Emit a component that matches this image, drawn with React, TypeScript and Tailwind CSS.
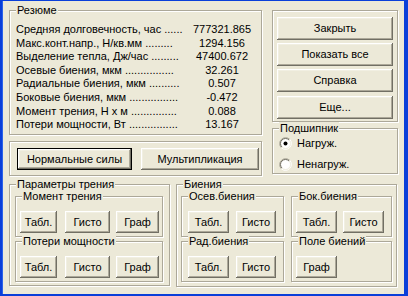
import React from "react";

function Group({ title, className, children }: { title?: string; className: string; children?: React.ReactNode }) {
  return (
    <div className={"relative border border-[#aca899] shadow-[inset_1px_1px_0_#fff,1px_1px_0_#fff] " + className}>
      {title ? (
        <span className="absolute -top-[7px] left-[6px] px-[1px] bg-[#ece9d8] leading-[13px] whitespace-nowrap">{title}</span>
      ) : null}
      {children}
    </div>
  );
}

function Btn({ className, children, def }: { className: string; children: React.ReactNode; def?: boolean }) {
  return (
    <div
      className={
        "flex items-center justify-center bg-[#ece9d8] leading-[13px] whitespace-nowrap shadow-[inset_-1px_-1px_0_#716f64,inset_1px_1px_0_#fff,inset_-2px_-2px_0_#aca899,inset_2px_2px_0_#f1efe2] " +
        (def ? "border border-black " : "") +
        className
      }
    >
      {children}
    </div>
  );
}

function Radio({ checked, label }: { checked?: boolean; label: string }) {
  return (
    <div className="flex items-center gap-[5px] h-[13px] leading-[13px]">
      <svg width="13" height="13" viewBox="0 0 13 13">
        <circle cx="6.5" cy="6.5" r="5" fill="#fff" />
        <path d="M2.26 10.74 A6 6 0 0 1 10.74 2.26" fill="none" stroke="#aca899" strokeWidth="1" />
        <path d="M10.74 2.26 A6 6 0 0 1 2.26 10.74" fill="none" stroke="#fff" strokeWidth="1" />
        <path d="M2.96 10.04 A5 5 0 0 1 10.04 2.96" fill="none" stroke="#716f64" strokeWidth="1" />
        <path d="M10.04 2.96 A5 5 0 0 1 2.96 10.04" fill="none" stroke="#f1efe2" strokeWidth="1" />
        {checked ? <circle cx="6.5" cy="6.5" r="2" fill="#000" /> : null}
      </svg>
      <span>{label}</span>
    </div>
  );
}

const rows: [string, string][] = [
  ["Средняя долговечность, час ......", "777321.865"],
  ["Макс.конт.напр., Н/кв.мм .........", "1294.156"],
  ["Выделение тепла, Дж/час .........", "47400.672"],
  ["Осевые биения, мкм ................", "32.261"],
  ["Радиальные биения, мкм ..........", "0.507"],
  ["Боковые биения, мкм ................", "-0.472"],
  ["Момент трения, Н х м ...............", "0.088"],
  ["Потери мощности, Вт ................", "13.167"],
];

export default function App() {
  return (
    <div className="w-[408px] h-[296px] bg-[#0a3fd9] pt-[1px] pl-[3px] pr-[4px] pb-[2px] font-['Liberation_Sans',Arial,sans-serif] text-[11px] text-black">
      <div className="w-full h-full bg-[#ece9d8] pl-[6px] pt-[9px] shadow-[-1px_0_0_#2a62ea]">
        {/* top row */}
        <div className="flex gap-[9px]">
          <div className="w-[254px] flex flex-col">
            <Group title="Резюме" className="w-[253px] h-[125px] pt-[12px] pl-[6px]">
              {rows.map(([l, v]) => (
                <div key={l} className="flex h-[13.6px] leading-[13.6px]">
                  <div className="w-[170px] flex-none whitespace-nowrap">{l}</div>
                  <div className="w-[72px] flex-none text-center">{v}</div>
                </div>
              ))}
            </Group>
            <Group className="mt-[6px] w-[253px] h-[35px] pl-[7px] pt-[6px] flex gap-[9px]">
              <Btn def className="w-[115px] h-[22px]">Нормальные силы</Btn>
              <Btn className="w-[118px] h-[22px]">Мультипликация</Btn>
            </Group>
          </div>
          <div className="w-[127px] flex flex-col">
            <Group className="w-[126px] h-[112px] pl-[4px] pt-[6px] flex flex-col gap-[3px]">
              <Btn className="w-[116px] h-[23px]">Закрыть</Btn>
              <Btn className="w-[116px] h-[23px]">Показать все</Btn>
              <Btn className="w-[116px] h-[23px]">Справка</Btn>
              <Btn className="w-[116px] h-[23px] mt-[1px]">Еще...</Btn>
            </Group>
            <Group title="Подшипник" className="mt-[6px] w-[126px] h-[46px] pl-[6px] pt-[8px] flex flex-col gap-[8px]">
              <Radio checked label="Нагруж." />
              <Radio label="Ненагруж." />
            </Group>
          </div>
        </div>
        {/* bottom row */}
        <div className="flex gap-[6px] mt-[8px]">
          <Group title="Параметры трения" className="w-[161px] h-[102px] pl-[5px] pt-[11px] flex flex-col gap-[4px]">
            <Group title="Момент трения" className="w-[148px] h-[41px] pl-[4px] pt-[14px] flex">
              <Btn className="w-[37px] h-[22px]">Табл.</Btn>
              <Btn className="w-[45px] h-[22px] ml-[8px]">Гисто</Btn>
              <Btn className="w-[43px] h-[22px] ml-[6px]">Граф</Btn>
            </Group>
            <Group title="Потери мощности" className="w-[148px] h-[41px] pl-[4px] pt-[14px] flex">
              <Btn className="w-[37px] h-[22px]">Табл.</Btn>
              <Btn className="w-[45px] h-[22px] ml-[8px]">Гисто</Btn>
              <Btn className="w-[43px] h-[22px] ml-[6px]">Граф</Btn>
            </Group>
          </Group>
          <Group title="Биения" className="w-[221px] h-[103px] pl-[4px] pt-[11px] grid grid-cols-[104px_102px] gap-x-[6px] gap-y-[4px] content-start">
            <Group title="Осев.биения" className="w-[103px] h-[41px] pl-[6px] pt-[14px] flex gap-[7px]">
              <Btn className="w-[41px] h-[22px]">Табл.</Btn>
              <Btn className="w-[40px] h-[22px]">Гисто</Btn>
            </Group>
            <Group title="Бок.биения" className="w-[101px] h-[41px] pl-[4px] pt-[14px] flex gap-[6px]">
              <Btn className="w-[41px] h-[22px]">Табл.</Btn>
              <Btn className="w-[41px] h-[22px]">Гисто</Btn>
            </Group>
            <Group title="Рад.биения" className="w-[103px] h-[41px] pl-[6px] pt-[14px] flex gap-[7px]">
              <Btn className="w-[41px] h-[22px]">Табл.</Btn>
              <Btn className="w-[40px] h-[22px]">Гисто</Btn>
            </Group>
            <Group title="Поле биений" className="w-[101px] h-[41px] pl-[4px] pt-[14px] flex">
              <Btn className="w-[41px] h-[22px]">Граф</Btn>
            </Group>
          </Group>
        </div>
      </div>
    </div>
  );
}
